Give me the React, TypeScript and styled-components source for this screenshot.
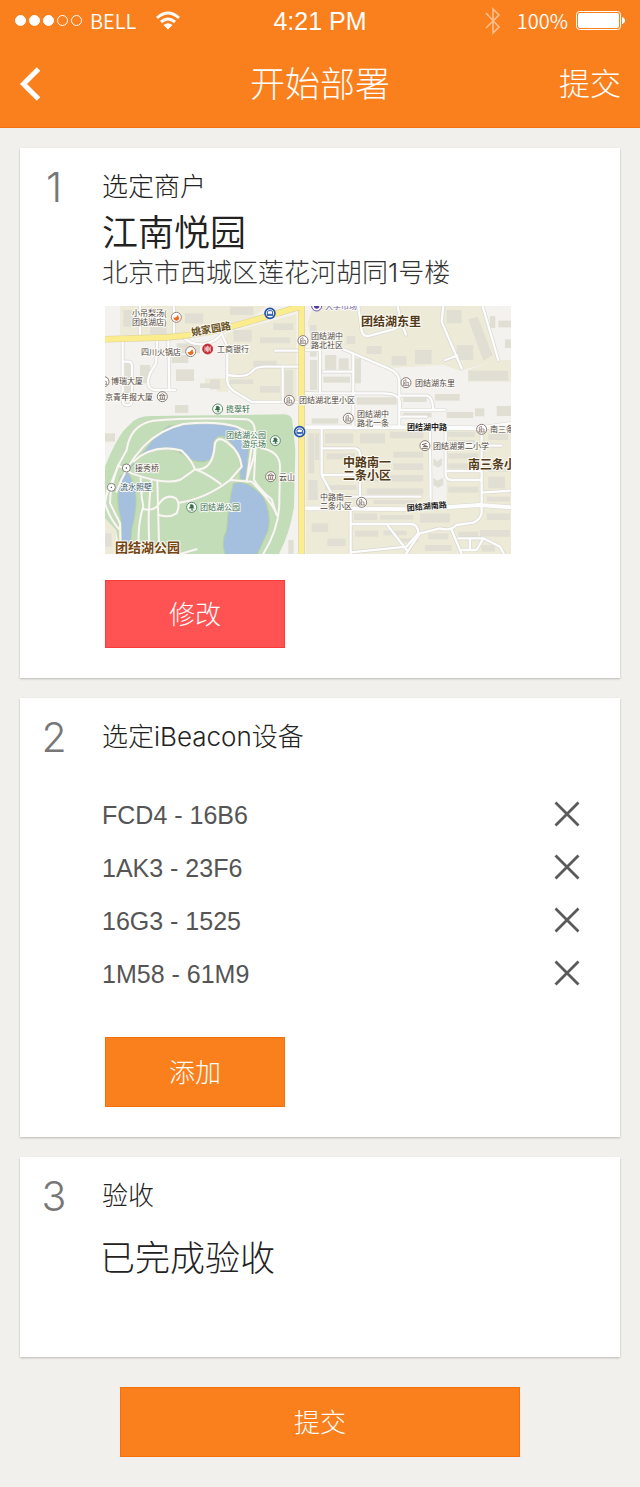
import React from 'react';
import styled, { createGlobalStyle } from 'styled-components';

const GlobalStyle = createGlobalStyle`
  *, *::before, *::after { box-sizing: border-box; }
  body {
    margin: 0;
    background: #f1f0ec;
    font-family: 'Noto Sans CJK SC', sans-serif;
    font-weight: 300;
    color: #222;
  }
  h1, h2, p, ul { margin: 0; padding: 0; font-weight: inherit; }
  button { border: 0; padding: 0; background: none; font: inherit; color: inherit; cursor: pointer; }
`;

const Header = styled.header`
  background: #fa7f1d;
  border-bottom: 1px solid #f27310;
  color: #fff;
`;

const StatusBar = styled.div`
  display: grid;
  grid-template-columns: 1fr auto 1fr;
  align-items: center;
  height: 41px;
  padding: 0 15px;
`;

const StatusGroup = styled.div<{ $end?: boolean }>`
  display: flex;
  align-items: center;
  justify-content: ${(p) => (p.$end ? 'flex-end' : 'flex-start')};
  font-size: 20px;
  line-height: 24px;
  font-weight: 350;
`;

const Signal = styled.div`
  display: flex;
  gap: 3px;
  margin-right: 8px;
`;

const Dot = styled.span<{ $on?: boolean }>`
  width: 11px;
  height: 11px;
  border: 1px solid #fff;
  border-radius: 50%;
  background: ${(p) => (p.$on ? '#fff' : 'transparent')};
`;

const Carrier = styled.span`
  margin-right: 19px;
`;

const Clock = styled.time`
  font-family: 'Liberation Sans', sans-serif;
  font-size: 25px;
  line-height: 32px;
  font-weight: 400;
`;

const Charge = styled.span`
  margin: 0 8px 0 16px;
`;

const NavBar = styled.nav`
  display: grid;
  grid-template-columns: 1fr auto 1fr;
  align-items: center;
  height: 86px;
  padding: 0 19px;
`;

const BackButton = styled.button`
  display: flex;
  justify-self: start;
`;

const PageTitle = styled.h1`
  padding-bottom: 4px;
  font-size: 35px;
  line-height: 48px;
`;

const NavAction = styled.button`
  justify-self: end;
  padding-bottom: 4px;
  font-size: 31px;
  line-height: 48px;
`;

const Steps = styled.main`
  display: flex;
  flex-direction: column;
  gap: 20px;
  padding: 20px 20px 30px;
`;

const Card = styled.section<{ $min?: number }>`
  display: grid;
  grid-template-columns: 80px minmax(0, 1fr);
  align-items: start;
  min-height: ${(p) => p.$min ?? 0}px;
  padding: 20px 0 30px;
  background: #fff;
  box-shadow: 0 1px 2px rgba(0, 0, 0, 0.24);
`;

const StepNumber = styled.span`
  padding-right: 12px;
  text-align: center;
  font-family: Inter, sans-serif;
  font-size: 41px;
  line-height: 38px;
  color: #777;
`;

const StepBody = styled.div`
  display: flex;
  flex-direction: column;
  align-items: flex-start;
`;

const StepTitle = styled.h2`
  padding-left: 2px;
  font-family: Inter, 'Noto Sans CJK SC', sans-serif;
  font-size: 26px;
  line-height: 38px;
`;

const MerchantName = styled.p`
  padding: 0 0 6px 2px;
  font-size: 36px;
  line-height: 48px;
  font-weight: 350;
  color: #222;
`;

const Address = styled.p`
  padding-left: 2px;
  font-family: Inter, 'Noto Sans CJK SC', sans-serif;
  font-size: 26px;
  line-height: 26px;
  color: #333;
`;

const Result = styled.p`
  margin-top: 14px;
  font-size: 35px;
  line-height: 54px;
`;

const MapFrame = styled.figure`
  width: 406px;
  max-width: calc(100% - 10px);
  margin: 20px 0 26px 5px;
  svg { display: block; width: 100%; height: auto; }
`;

const ActionButton = styled.button<{ $tone: 'danger' | 'primary' }>`
  width: 180px;
  height: ${(p) => (p.$tone === 'danger' ? 68 : 70)}px;
  margin-left: 5px;
  padding-bottom: 4px;
  font-size: 26px;
  color: #fff;
  background: ${(p) => (p.$tone === 'danger' ? '#ff5252' : '#fa7f1d')};
  border: 1px solid ${(p) => (p.$tone === 'danger' ? '#fb3a3a' : '#f56f0a')};
`;

const SubmitButton = styled(ActionButton)`
  align-self: center;
  width: 100%;
  max-width: 400px;
  margin: 10px 0 0;
`;

const DeviceList = styled.ul`
  align-self: stretch;
  margin: 33px 0 36px;
  list-style: none;
`;

const DeviceRow = styled.li`
  display: flex;
  align-items: center;
  justify-content: space-between;
  height: 53px;
  padding: 0 40px 0 2px;
  font-family: 'Liberation Sans', sans-serif;
  font-size: 25px;
  font-weight: 400;
  color: #555;
`;

const RemoveButton = styled.button`
  display: flex;
  padding-bottom: 4px;
`;

const devices = ['FCD4 - 16B6', '1AK3 - 23F6', '16G3 - 1525', '1M58 - 61M9'];

/* Map geometry is drawn on a grid three times finer than the labels. */
const minorRoads = [
  'M15 120H40M120 18V110M222 18V105M68 125V185M68 185H88Q96 188 96 200V300Q96 316 82 316Q68 316 68 300V185M205 120L208 268M172 120L168 190L150 220Q138 250 150 264Q156 270 170 270H225',
  'M250 112Q270 135 310 133Q350 125 365 100L382 140V245Q385 260 400 272L455 306H605M382 225Q440 235 455 215Q470 198 500 200H600M548 205V300M525 152H600M612 280H640',
  'M775 18L785 92Q790 112 810 107L880 88Q905 80 900 55L893 18M905 70L918 104M1030 18L1025 65L1085 205M1035 180L1072 167M1148 18L1195 180',
  'M660 150V278M670 215H758M760 165V350M700 135L865 205Q898 218 898 245V378M615 280H850Q900 280 900 310V330H1035M900 287H980Q998 290 1000 328M898 350H980M760 350V378M618 150H660',
  'M665 385V525L700 590M670 445H765Q780 448 780 465V530M670 525H780V590M700 590H962M990 390L992 600M1037 378V525Q1040 540 1055 540H1145M1037 513H1145M1145 395V640Q1140 660 1120 668L1070 675Q1050 695 1020 685L960 700Q935 735 918 762M1145 578L1233 572M1095 437H1205',
  'M752 632V762M752 672H935Q955 675 955 700M862 675L920 750M752 757L920 740L955 700M1055 690L1085 762M1075 715H1150L1200 740L1212 762M1110 715V750H1085M1150 715L1130 750H1110',
];

const mainRoads = ['M615 625L940 628L1140 615L1233 622', 'M615 382H900L1140 385L1233 372'];

const parkPaths = [
  'M15 595L55 496L80 450Q90 375 160 362Q270 352 440 358Q480 368 455 440L440 545M50 575Q75 500 130 440Q180 388 250 372Q350 362 410 380Q450 400 466 410L462 470L440 540',
  'M100 485Q160 430 245 452Q275 480 285 508Q270 520 240 540Q190 555 95 520L55 496M285 508Q340 515 345 430Q355 405 385 430Q420 455 425 500L390 540L455 545Q520 610 530 645M285 508Q320 520 362 552M485 445Q540 455 540 500L538 600Q540 680 490 762M238 608Q320 595 390 540M468 415L462 540Q480 570 515 598L530 645',
  'M25 555L15 610Q30 660 60 690M55 496Q30 560 30 610L60 670L62 762M122 535L125 590L130 620Q110 680 118 762M155 540Q140 640 150 762M172 545L178 762M130 627Q165 635 178 610Q200 580 228 595Q242 610 230 640Q205 655 178 645M240 762L290 748',
];

const blocks: [number, number, number, number][] = [
  [70, 30, 40, 50], [150, 62, 50, 40], [255, 40, 55, 30], [390, 20, 70, 25], [520, 70, 60, 20],
  [120, 195, 30, 55], [228, 208, 54, 35], [74, 190, 18, 90], [230, 130, 70, 30], [215, 165, 50, 24],
  [330, 238, 30, 30], [400, 90, 55, 35], [460, 182, 70, 18], [480, 112, 90, 18], [390, 238, 70, 14],
  [555, 210, 24, 80], [480, 258, 60, 20], [225, 315, 40, 24], [300, 250, 30, 14], [15, 400, 30, 25],
  [800, 138, 45, 24], [875, 168, 45, 28], [945, 150, 50, 42], [740, 108, 26, 24], [630, 75, 20, 95],
  [1040, 30, 45, 40], [1070, 135, 50, 45], [1105, 212, 120, 30], [1170, 48, 16, 36], [1195, 62, 38, 20],
  [1215, 118, 18, 26], [675, 165, 34, 44], [716, 175, 30, 34], [765, 175, 18, 75], [630, 180, 22, 90],
  [670, 230, 80, 18], [770, 292, 120, 22], [910, 292, 70, 14], [1005, 282, 74, 20], [1040, 336, 80, 18],
  [1125, 325, 28, 24], [635, 355, 80, 16], [910, 338, 85, 14], [1190, 318, 43, 30],
  [675, 400, 85, 30], [780, 400, 75, 30], [870, 395, 100, 20], [625, 400, 18, 120], [645, 400, 12, 80],
  [680, 460, 85, 18], [880, 455, 90, 18], [880, 490, 90, 20], [675, 555, 95, 15], [800, 525, 170, 20],
  [800, 565, 170, 18], [625, 540, 28, 60], [820, 600, 130, 12], [1045, 395, 80, 16], [1045, 420, 80, 12],
  [1045, 460, 90, 16], [1045, 490, 80, 16], [1045, 560, 90, 18], [1165, 400, 60, 20], [1165, 495, 60, 20],
  [1165, 530, 50, 35], [1160, 590, 70, 15], [635, 670, 50, 26], [682, 716, 55, 22], [762, 640, 70, 20],
  [765, 692, 70, 18], [840, 645, 100, 14], [850, 692, 70, 14], [960, 640, 90, 28], [895, 715, 60, 12],
  [1075, 695, 60, 16], [1160, 640, 70, 20], [1140, 690, 90, 20], [985, 700, 60, 18], [975, 735, 80, 18],
  [1145, 735, 40, 20], [565, 720, 16, 42], [15, 700, 20, 40],
];

type PoiKind = 'food' | 'bank' | 'bus' | 'building' | 'tree' | 'dot' | 'pavilion' | 'school' | 'shop';

const pois: [PoiKind, number, number][] = [
  ['food', 229, 52], ['food', 272, 155], ['bank', 323, 147], ['bus', 510, 40], ['bus', 599, 395],
  ['building', 609, 122], ['pavilion', 187, 290], ['building', 568, 301], ['building', 12, 245],
  ['building', 918, 248], ['building', 745, 355], ['building', 785, 607], ['building', 1145, 388],
  ['school', 975, 437], ['tree', 353, 327], ['tree', 275, 622], ['tree', 526, 422],
  ['dot', 79, 504], ['dot', 34, 562], ['pavilion', 512, 530], ['shop', 650, 18],
];

const ringColors: Record<PoiKind, string> = {
  food: '#857066', bank: '#c22a30', bus: '#2454a8', building: '#75645c', tree: '#4b7a55',
  dot: '#756a66', pavilion: '#75645c', school: '#75645c', shop: '#5538a5',
};

function Poi({ kind, x, y }: { kind: PoiKind; x: number; y: number }) {
  const ring = ringColors[kind];
  return (
    <g transform={`translate(${x} ${y})`} fill="none" stroke={ring} strokeWidth="3">
      <circle r={kind === 'dot' ? 12 : 15} fill={kind === 'bank' ? ring : '#fff'} strokeWidth={kind === 'bus' ? 5 : 2.5} />
      {kind === 'food' && <path d="M-9 0Q-1 5 4 -7L7 -5Q4 0 9 1Q8 10 0 10Q-8 9 -9 0Z" fill="#e96b20" stroke="none" />}
      {kind === 'bank' && <path d="M-8 -8V8M8 -8V8M-8 0H8M0 -10V10M-4 -6H4V6H-4Z" stroke="#fff" strokeWidth="2" />}
      {kind === 'bus' && <path d="M-8 8V-5Q-7 -8 0 -8T8 -5V8M-8 3H8M-6 6H6" />}
      {kind === 'building' && <path d="M-7 8V-6L0 -9V8M2 -1H7V8M-10 8H10M-4 -2V5" strokeWidth="2" />}
      {kind === 'tree' && <path d="M0 9L-1 3H-8L-4 -3L-5 -8L1 -9L6 -5L5 0L8 3H2L3 9ZM-8 9H9" fill="#2e7145" strokeWidth="1" />}
      {kind === 'dot' && <circle r="2" fill="#333" stroke="none" />}
      {kind === 'pavilion' && <path d="M-9 -3L0 -9L9 -3ZM-6 -1V7M6 -1V7M0 -1V7M-9 8H9" strokeWidth="2.5" />}
      {kind === 'school' && <path d="M-9 -3L5 -7M-4 -2L8 3L-6 2M-9 8H8" />}
      {kind === 'shop' && <circle r="8" fill={ring} stroke="none" />}
    </g>
  );
}

/* [text, x, baseline, size, colour, bold, angle] */
type Label = [string, number, number, number, string, boolean?, number?];

const gray = '#504744';
const green = '#2f6c4d';
const brown = '#533a18';

const labels: Label[] = [
  ['小吊梨汤(', 27, 10, 8, gray],
  ['团结湖店)', 27, 19, 8, gray],
  ['姚家园路', 87, 30, 10, '#69501b', true, -10],
  ['四川火锅店', 36, 49, 8, gray],
  ['工商银行', 112, 46, 8, gray],
  ['博瑞大厦', 6, 78, 8, gray],
  ['京青年报大厦', 0, 94, 8, gray],
  ['揽翠轩', 121, 106, 8, green],
  ['大学市场', 220, 3, 8, '#6a5aa0'],
  ['团结湖东里', 256, 20, 12, brown, true],
  ['团结湖中', 206, 33, 8, gray],
  ['路北社区', 206, 42, 8, gray],
  ['团结湖东里', 310, 80, 8, gray],
  ['团结湖北里小区', 194, 97, 8, gray],
  ['团结湖中', 252, 111, 8, gray],
  ['路北一条', 252, 120, 8, gray],
  ['团结湖中路', 302, 124, 8, '#222', true],
  ['南三条', 385, 126, 8, gray],
  ['团结湖公园', 121, 132, 8, green],
  ['游乐场', 137, 141, 8, green],
  ['团结湖第二小学', 328, 143, 8, gray],
  ['中路南一', 238, 161, 12, brown, true],
  ['二条小区', 238, 174, 12, brown, true],
  ['南三条小区', 363, 163, 12, brown, true],
  ['接秀桥', 30, 165, 8, gray],
  ['云山', 174, 174, 8, gray],
  ['流水照壁', 15, 184, 8, '#315773'],
  ['中路南一', 215, 194, 8, gray],
  ['二条小区', 215, 203, 8, gray],
  ['团结湖公园', 95, 204, 8, green],
  ['团结湖南路', 302, 205, 8, '#222', true, -5],
  ['团结湖公园', 10, 246, 13, '#754513', true],
];

function StreetMap() {
  return (
    <svg viewBox="0 0 406 248" role="img" aria-label="江南悦园周边地图">
      <g transform="scale(0.3333) translate(-15 -18)">
        <rect x="15" y="18" width="1222" height="748" fill="#f3f2ef" />
        <g fill="#edebd7">
          <path d="M222 18H500L440 68L245 104L222 104ZM60 18H118V105H60ZM125 18H218V105H125Z" />
          <path d="M378 100L590 42V308H455L382 260ZM315 235H385V275H350V265H315Z" />
          <path d="M622 72L640 18H1142L1192 182L1080 212L1030 195L880 203L790 170L730 140H640Z" />
          <path d="M1105 210L1195 180H1237V245H1105ZM618 388H985V766H618ZM1040 388H1237V766H985V610H1040ZM15 655L48 690V766H15Z" />
        </g>
        <g fill="#e1dfd3">
          {blocks.map(([x, y, w, h], i) => (
            <rect key={i} x={x} y={y} width={w} height={h} />
          ))}
          <path d="M1105 58L1133 50L1178 165L1150 182ZM1000 475L1012 484L1026 475V495L1014 503L1000 495ZM1000 533L1012 542L1030 533V555L1014 563L1000 555Z" />
        </g>
        <path d="M15 500Q55 400 88 375Q110 346 160 348L555 343Q575 345 577 362L586 450L582 620Q570 700 535 766H62L48 690L15 655Z" fill="#c2ddb8" />
        <g fill="#a5bfdf" stroke="#b9d29d" strokeWidth="3">
          <path d="M60 530L135 450Q170 400 205 378Q290 365 385 372Q430 385 450 420L437 540H420V490Q405 430 375 412Q345 400 340 435Q350 480 310 486Q270 485 250 465Q215 440 170 448Q120 460 85 515L105 560Q115 620 95 690L90 768H65L63 660Q45 600 60 530Z" />
          <path d="M400 550Q440 535 490 590Q515 640 505 690L470 768H378Q360 730 380 690Q385 610 400 550Z" />
        </g>
        <g fill="none" strokeLinejoin="round" strokeLinecap="round">
          <g stroke="#d8d7d2" strokeWidth="11">
            {minorRoads.map((d) => <path key={d} d={d} />)}
            {mainRoads.map((d) => <path key={d} d={d} strokeWidth="15" />)}
          </g>
          <g stroke="#fdfdfd" strokeWidth="7">
            {minorRoads.map((d) => <path key={d} d={d} />)}
            {mainRoads.map((d) => <path key={d} d={d} strokeWidth="12" />)}
          </g>
          <g stroke="#d0d5c6" strokeWidth="8">
            {parkPaths.map((d) => <path key={d} d={d} />)}
          </g>
          <g stroke="#f8f7f2" strokeWidth="6">
            {parkPaths.map((d) => <path key={d} d={d} />)}
          </g>
          <path d="M10 118L200 112Q330 102 430 70L600 20M605 18V770" stroke="#ddd4a0" strokeWidth="20" />
          <path d="M10 118L200 112Q330 102 430 70L600 20M605 18V770" stroke="#fbec8d" strokeWidth="16" />
        </g>
        {pois.map(([kind, x, y]) => (
          <Poi key={`${x}-${y}`} kind={kind} x={x} y={y} />
        ))}
      </g>
      <g stroke="#fbfaf5" strokeWidth="2" strokeLinejoin="round" paintOrder="stroke" fontFamily="'Noto Sans CJK SC', sans-serif">
        {labels.map(([text, x, y, size, fill, bold, angle], i) => (
          <text
            key={i}
            x={x}
            y={y}
            fontSize={size}
            fontWeight={bold ? 700 : 400}
            fill={fill}
            transform={angle ? `rotate(${angle} ${x} ${y})` : undefined}
          >
            {text}
          </text>
        ))}
      </g>
    </svg>
  );
}

function WifiIcon() {
  return (
    <svg width="26" height="19" viewBox="0 0 26 19" fill="none" stroke="#fff" aria-hidden="true">
      <path d="M2 7Q13 -3 24 7" strokeWidth="3" />
      <path d="M6 11Q13 5 20 11" strokeWidth="3" />
      <path d="M8.500 14Q13 10.500 17.500 14L13 18.500Z" fill="#fff" stroke="none" />
    </svg>
  );
}

function BluetoothIcon() {
  return (
    <svg width="16" height="28" viewBox="0 0 16 28" fill="none" stroke="#fff" strokeWidth="1.600" opacity="0.5" aria-hidden="true">
      <path d="M1 6L14 20L8 26V2L14 8L1 21" />
    </svg>
  );
}

function BatteryIcon() {
  return (
    <svg width="49" height="20" viewBox="0 0 49 20" aria-hidden="true">
      <rect x="0.500" y="0.500" width="44" height="18" rx="3" fill="none" stroke="#fff" />
      <rect x="2" y="2" width="41" height="15" rx="2" fill="#fff" />
      <path d="M46 6Q49 7 49 9.500T46 13Z" fill="#fff" />
    </svg>
  );
}

export default function App() {
  return (
    <>
      <GlobalStyle />
      <Header>
        <StatusBar>
          <StatusGroup>
            <Signal>
              <Dot $on />
              <Dot $on />
              <Dot $on />
              <Dot />
              <Dot />
            </Signal>
            <Carrier>BELL</Carrier>
            <WifiIcon />
          </StatusGroup>
          <Clock>4:21 PM</Clock>
          <StatusGroup $end>
            <BluetoothIcon />
            <Charge>100%</Charge>
            <BatteryIcon />
          </StatusGroup>
        </StatusBar>
        <NavBar>
          <BackButton type="button" aria-label="返回">
            <svg width="22" height="34" viewBox="0 0 22 34" fill="none" stroke="#fff" strokeWidth="5" aria-hidden="true">
              <path d="M19.500 2L4.500 17L19.500 32" />
            </svg>
          </BackButton>
          <PageTitle>开始部署</PageTitle>
          <NavAction type="button">提交</NavAction>
        </NavBar>
      </Header>
      <Steps>
        <Card>
          <StepNumber>1</StepNumber>
          <StepBody>
            <StepTitle>选定商户</StepTitle>
            <MerchantName>江南悦园</MerchantName>
            <Address>北京市西城区莲花河胡同1号楼</Address>
            <MapFrame>
              <StreetMap />
            </MapFrame>
            <ActionButton type="button" $tone="danger">修改</ActionButton>
          </StepBody>
        </Card>
        <Card>
          <StepNumber>2</StepNumber>
          <StepBody>
            <StepTitle>选定iBeacon设备</StepTitle>
            <DeviceList>
              {devices.map((id) => (
                <DeviceRow key={id}>
                  {id}
                  <RemoveButton type="button" aria-label={`删除 ${id}`}>
                    <svg width="26" height="26" viewBox="0 0 26 26" stroke="#5a5a5a" strokeWidth="2.800" aria-hidden="true">
                      <path d="M1.500 1.500L24.500 24.500M24.500 1.500L1.500 24.500" />
                    </svg>
                  </RemoveButton>
                </DeviceRow>
              ))}
            </DeviceList>
            <ActionButton type="button" $tone="primary">添加</ActionButton>
          </StepBody>
        </Card>
        <Card $min={200}>
          <StepNumber>3</StepNumber>
          <StepBody>
            <StepTitle>验收</StepTitle>
            <Result>已完成验收</Result>
          </StepBody>
        </Card>
        <SubmitButton type="button" $tone="primary">提交</SubmitButton>
      </Steps>
    </>
  );
}
